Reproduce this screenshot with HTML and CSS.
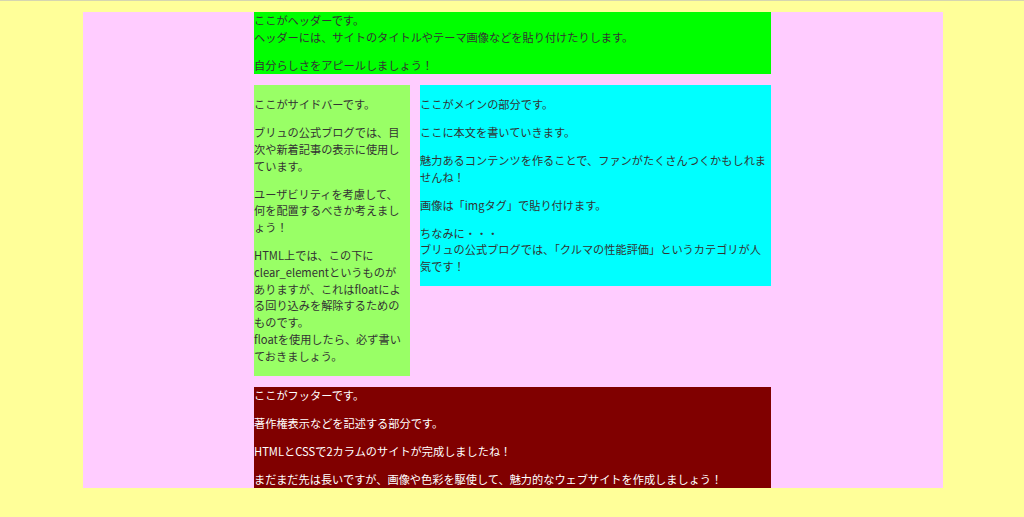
FILE: index.html
```html
<!DOCTYPE html>
<html lang="ja">
<head>
<meta charset="utf-8">
<title>2カラムのサイト</title>
<link rel="stylesheet" href="styles.css">
</head>
<body>
<div class="wrapper">
  <div class="header">
    <p>ここがヘッダーです。<br>ヘッダーには、サイトのタイトルやテーマ画像などを貼り付けたりします。</p>
    <p>自分らしさをアピールしましょう！</p>
  </div>
  <div class="sidebar">
    <p>ここがサイドバーです。</p>
    <p>ブリュの公式ブログでは、目<br>次や新着記事の表示に使用し<br>ています。</p>
    <p>ユーザビリティを考慮して、<br>何を配置するべきか考えまし<br>ょう！</p>
    <p>HTML上では、この下に<br>clear_elementというものが<br>ありますが、これはfloatによ<br>る回り込みを解除するための<br>ものです。<br>floatを使用したら、必ず書い<br>ておきましょう。</p>
  </div>
  <div class="main">
    <p>ここがメインの部分です。</p>
    <p>ここに本文を書いていきます。</p>
    <p>魅力あるコンテンツを作ることで、ファンがたくさんつくかもしれませんね！</p>
    <p>画像は「imgタグ」で貼り付けます。</p>
    <p>ちなみに・・・<br>ブリュの公式ブログでは、「クルマの性能評価」というカテゴリが人気です！</p>
  </div>
  <div class="clear_element"></div>
  <div class="footer">
    <p>ここがフッターです。</p>
    <p>著作権表示などを記述する部分です。</p>
    <p>HTMLとCSSで2カラムのサイトが完成しましたね！</p>
    <p>まだまだ先は長いですが、画像や色彩を駆使して、魅力的なウェブサイトを作成しましょう！</p>
  </div>
</div>
</body>
</html>
```
FILE: styles.css
```css
html {
  border-top: 1px solid #d6d6b0;
  background: #ffff99;
}
body {
  margin: 0;
  padding: 0 0 0 2px;
  background: #ffff99;
  color: #333333;
  font-family: "Noto Sans CJK JP", "Noto Sans", sans-serif;
  font-size: 11.2px;
  line-height: 1.5;
}
p {
  margin: 11.2px 0;
}
.wrapper {
  width: 860px;
  margin: 11px auto 0;
  background: #ffccff;
}
.header {
  width: 517px;
  margin-left: 171px;
  background: #00ff00;
}
.header p:first-child {
  margin-top: 0;
}
.sidebar {
  float: left;
  width: 156px;
  margin-left: 171px;
  background: #99ff66;
}
.main {
  float: right;
  width: 351px;
  margin-right: 172px;
  background: #00ffff;
}
.clear_element {
  clear: both;
}
.footer {
  width: 517px;
  margin-left: 171px;
  background: #800000;
  color: #ffffff;
}
.footer p:last-child {
  margin-bottom: 0;
}
```
